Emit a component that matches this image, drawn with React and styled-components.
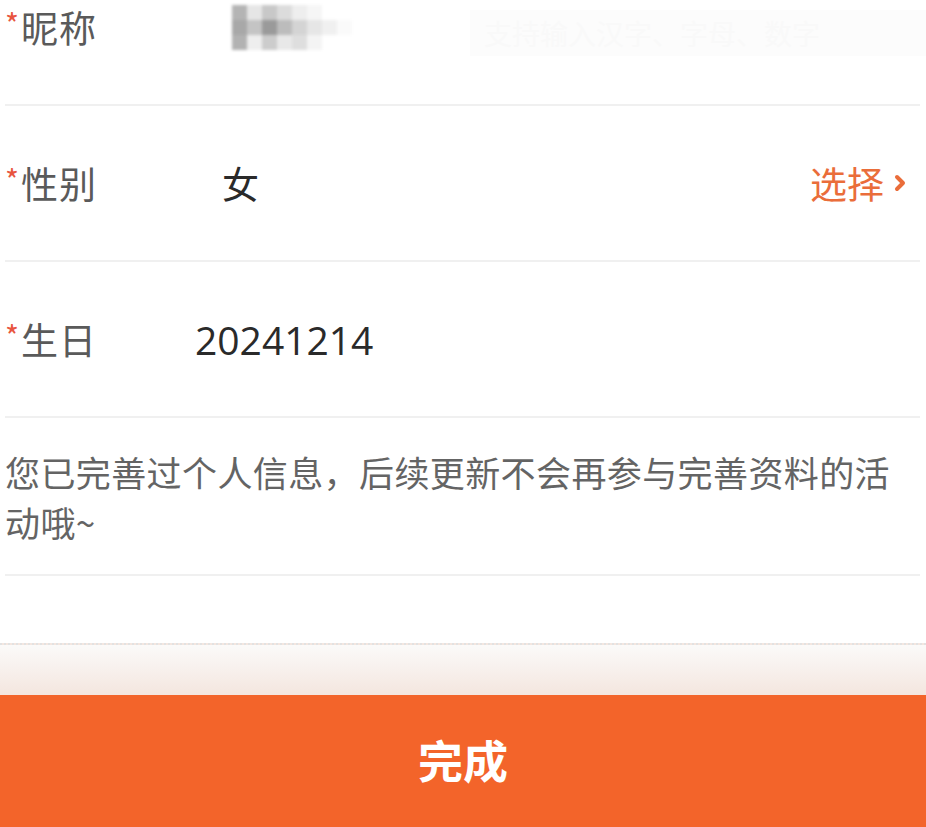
import React from 'react';
import styled, { createGlobalStyle } from 'styled-components';

const GlobalStyle = createGlobalStyle`
  html, body {
    margin: 0;
    padding: 0;
    background: #fff;
    overflow: hidden;
  }
  body {
    font-family: 'Noto Sans CJK SC', 'Noto Sans', sans-serif;
  }
`;

const Page = styled.div`
  width: 926px;
  height: 827px;
  display: flex;
  flex-direction: column;
  overflow: hidden;
  background: #fff;
`;

const Form = styled.div`
  display: flex;
  flex-direction: column;
  padding: 0 6px 0 5px;
  margin-top: -50px;
`;

const Row = styled.div`
  display: flex;
  align-items: center;
  height: 156px;
  border-bottom: 2px solid #f0f0f0;
  box-sizing: border-box;
`;

const Label = styled.div`
  width: ${p => p.$w}px;
  flex-shrink: 0;
  display: flex;
  align-items: center;
  font-size: 37px;
  color: #5a5a5a;
  letter-spacing: 1px;
`;

const Star = styled.span`
  color: #e8553f;
  font-size: 30px;
  margin-right: 1px;
  position: relative;
  top: -4px;
`;

const Value = styled.div`
  flex: 1;
  font-size: ${p => p.$size || 37}px;
  color: #2a2a2a;
  font-family: ${p => (p.$latin ? "'Open Sans', 'Noto Sans', sans-serif" : 'inherit')};
`;

const Blur = styled.div`
  display: grid;
  grid-template-columns: repeat(9, 15px);
  grid-template-rows: repeat(3, 15px);
  margin-left: -16px;
  filter: blur(1.5px);
`;

const Block = styled.div`
  background: ${p => p.$c};
`;

const Placeholder = styled.div`
  margin-left: auto;
  margin-right: -6px;
  width: 456px;
  height: 46px;
  background: #fcfcfc;
  color: #f9f9f9;
  font-size: 28px;
  display: flex;
  align-items: center;
  padding-left: 14px;
  box-sizing: border-box;
  white-space: nowrap;
  overflow: hidden;
  align-self: flex-end;
  margin-bottom: 48px;
`;

const Select = styled.div`
  display: flex;
  align-items: center;
  gap: 10px;
  color: #ea6d3a;
  font-size: 37px;
  margin-right: 14px;
`;

const Note = styled.div`
  font-size: 35px;
  line-height: 50px;
  color: #646464;
  padding: 29px 0 27px;
  border-bottom: 2px solid #f0f0f0;
  letter-spacing: 0.4px;
`;

const Spacer = styled.div`
  flex: 1;
`;

const Footer = styled.div`
  display: flex;
  flex-direction: column;
`;

const Fade = styled.div`
  height: 50px;
  border-top: 2px dotted #e2e2e2;
  background: linear-gradient(#fbfaf9, #f4e6df);
`;

const DoneButton = styled.button`
  height: 132px;
  border: none;
  background: #f3642a;
  color: #fff;
  font-family: 'Noto Sans CJK SC', sans-serif;
  font-size: 45px;
  font-weight: 700;
  padding: 0 0 4px;
  cursor: pointer;
`;

const blurCells = [
  '#fff', '#b4b4b4', '#e6e6e6', '#c8c8c8', '#dcdcdc', '#eeeeee', '#f6f6f6', '#fff', '#fff',
  '#fff', '#a8a8a8', '#c4c4c4', '#9a9a9a', '#bcbcbc', '#d4d4d4', '#e6e6e6', '#f0f0f0', '#fafafa',
  '#fff', '#b2b2b2', '#eeeeee', '#cccccc', '#e8e8e8', '#dedede', '#f4f4f4', '#fff', '#fff',
];

const Chevron = () => (
  <svg width="12" height="20" viewBox="0 0 12 20">
    <path d="M3 4 L9 10 L3 16" fill="none" stroke="#ea6d3a" strokeWidth="4" strokeLinecap="round" strokeLinejoin="round" />
  </svg>
);

export default function App() {
  return (
    <Page>
      <GlobalStyle />
      <Form>
        <Row>
          <Label $w={228}><Star>*</Star>昵称</Label>
          <Blur>
            {blurCells.map((c, i) => <Block key={i} $c={c} />)}
          </Blur>
          <Placeholder>支持输入汉字、字母、数字</Placeholder>
        </Row>
        <Row>
          <Label $w={217}><Star>*</Star>性别</Label>
          <Value>女</Value>
          <Select>选择<Chevron /></Select>
        </Row>
        <Row>
          <Label $w={190}><Star>*</Star>生日</Label>
          <Value $latin $size={39}>20241214</Value>
        </Row>
        <Note>您已完善过个人信息，后续更新不会再参与完善资料的活动哦~</Note>
      </Form>
      <Spacer />
      <Footer>
        <Fade />
        <DoneButton>完成</DoneButton>
      </Footer>
    </Page>
  );
}
